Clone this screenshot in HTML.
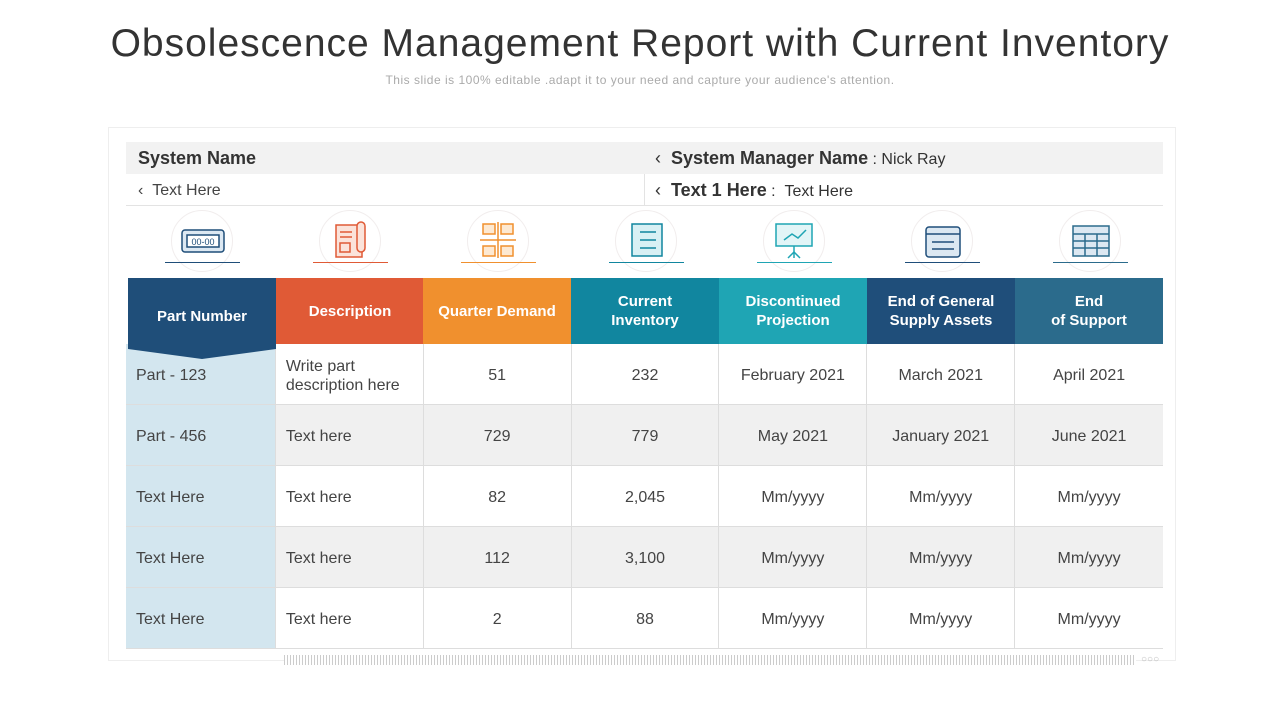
<!DOCTYPE html>
<html><head><meta charset="utf-8"><style>
*{margin:0;padding:0;box-sizing:border-box}
body{width:1280px;height:720px;background:#fff;font-family:"Liberation Sans",sans-serif;position:relative;overflow:hidden;color:#444}
.abs{position:absolute}
h1{position:absolute;top:22px;left:0;width:1280px;text-align:center;font-weight:normal;font-size:39px;color:#333;letter-spacing:1px}
.sub{top:73px;left:0;width:1280px;text-align:center;font-size:12px;color:#aaa;letter-spacing:0.5px}
.card{left:108px;top:127px;width:1068px;height:534px;border:1px solid #eee}
.hdr{height:66px;top:278px;color:#fff;font-weight:bold;font-size:15px;display:flex;align-items:center;justify-content:center;text-align:center;line-height:19px;width:148px}
.cell{width:148px;height:61px;display:flex;align-items:center;justify-content:center;font-size:16px;color:#444;border-right:1px solid #ddd;border-bottom:1px solid #ddd;padding-top:3px}
.l{justify-content:flex-start;padding-left:10px}
.circ{width:62px;height:62px;border-radius:50%;border:1px solid #f1eded;top:210px}
.line{height:1px;top:262px;width:75px}
</style></head><body>
<h1>Obsolescence Management Report with Current Inventory</h1>
<div class="abs sub">This slide is 100% editable .adapt it to your need and capture your audience's attention.</div>
<div class="abs card"></div>
<div class="abs" style="left:126px;top:142px;width:1037px;height:32px;background:#f2f2f2"></div>
<div class="abs" style="left:126px;top:205px;width:1037px;height:1px;background:#e3e3e3"></div>
<div class="abs" style="left:644px;top:174px;width:1px;height:31px;background:#e3e3e3"></div>
<div class="abs" style="left:138px;top:148px;font-size:18px;font-weight:bold;color:#333">System Name</div>
<div class="abs" style="left:138px;top:182px;font-size:16px;color:#444">‹ &nbsp;Text Here</div>
<div class="abs" style="left:655px;top:148px;font-size:18px;color:#333">‹ &nbsp;<b>System Manager Name</b><span style="font-size:16px"> : Nick Ray</span></div>
<div class="abs" style="left:655px;top:180px;font-size:18px;color:#333">‹ &nbsp;<b>Text 1 Here</b><span style="font-size:16px"> : &nbsp;Text Here</span></div>

<div class="abs circ" style="left:171px"></div><div class="abs circ" style="left:319px"></div><div class="abs circ" style="left:467px"></div><div class="abs circ" style="left:615px"></div><div class="abs circ" style="left:763px"></div><div class="abs circ" style="left:911px"></div><div class="abs circ" style="left:1059px"></div>
<div class="abs line" style="left:165px;background:#1f4e79"></div>
<div class="abs line" style="left:313px;background:#e05a36"></div>
<div class="abs line" style="left:461px;background:#f0902e"></div>
<div class="abs line" style="left:609px;background:#11869f"></div>
<div class="abs line" style="left:757px;background:#1fa5b4"></div>
<div class="abs line" style="left:905px;background:#1f4e7a"></div>
<div class="abs line" style="left:1053px;background:#2b6b8c"></div>
<svg class="abs" style="left:0;top:0" width="1280" height="280" fill="none" stroke-width="1.5">
<g stroke="#1f4e79"><rect x="182" y="230" width="42" height="22" rx="3" fill="#dce8f2"/><rect x="187" y="235" width="32" height="12" fill="#fff"/><text x="203" y="245" font-size="9" fill="#1f4e79" stroke="none" text-anchor="middle" font-family="Liberation Sans">00-00</text></g>
<g stroke="#e05a36"><rect x="336" y="225" width="26" height="32" fill="#fbe3da"/><rect x="340" y="243" width="10" height="9"/><line x1="340" y1="232" x2="352" y2="232"/><line x1="340" y1="237" x2="352" y2="237"/><rect x="357" y="222" width="8" height="30" rx="4" fill="#fbe3da"/></g>
<g stroke="#f0902e"><rect x="483" y="224" width="12" height="10" fill="#fde9d2"/><rect x="501" y="224" width="12" height="10" fill="#fde9d2"/><rect x="483" y="246" width="12" height="10" fill="#fde9d2"/><rect x="501" y="246" width="12" height="10" fill="#fde9d2"/><line x1="498" y1="222" x2="498" y2="258"/><line x1="480" y1="240" x2="516" y2="240"/></g>
<g stroke="#11869f"><rect x="632" y="224" width="30" height="32" fill="#d8f0f4"/><line x1="640" y1="232" x2="656" y2="232"/><line x1="640" y1="240" x2="656" y2="240"/><line x1="640" y1="248" x2="656" y2="248"/></g>
<g stroke="#1fa5b4"><rect x="776" y="224" width="36" height="22" fill="#e2f5f7"/><polyline points="784,240 792,234 798,238 806,230"/><line x1="794" y1="246" x2="794" y2="258"/><line x1="794" y1="252" x2="788" y2="258"/><line x1="794" y1="252" x2="800" y2="258"/></g>
<g stroke="#1f4e7a"><rect x="926" y="227" width="34" height="30" rx="3" fill="#dce8f2"/><line x1="926" y1="234" x2="960" y2="234"/><line x1="932" y1="242" x2="954" y2="242"/><line x1="932" y1="249" x2="954" y2="249"/></g>
<g stroke="#2b6b8c"><rect x="1073" y="226" width="36" height="30" fill="#dce8f2"/><line x1="1073" y1="234" x2="1109" y2="234"/><line x1="1073" y1="241" x2="1109" y2="241"/><line x1="1073" y1="248" x2="1109" y2="248"/><line x1="1085" y1="234" x2="1085" y2="256"/><line x1="1097" y1="234" x2="1097" y2="256"/></g>
</svg>

<div class="abs" style="left:126px;top:344px;width:1037px">
<div style="display:flex;background:#fff"><div class="cell l" style="background:#d3e6ef;width:150px">Part - 123</div><div class="cell l" style="line-height:19px">Write part<br>description here</div><div class="cell">51</div><div class="cell">232</div><div class="cell">February 2021</div><div class="cell">March 2021</div><div class="cell" style="border-right:0">April 2021</div></div>
<div style="display:flex;background:#f0f0f0"><div class="cell l" style="background:#d3e6ef;width:150px">Part - 456</div><div class="cell l">Text here</div><div class="cell">729</div><div class="cell">779</div><div class="cell">May 2021</div><div class="cell">January 2021</div><div class="cell" style="border-right:0">June 2021</div></div>
<div style="display:flex;background:#fff"><div class="cell l" style="background:#d3e6ef;width:150px">Text Here</div><div class="cell l">Text here</div><div class="cell">82</div><div class="cell">2,045</div><div class="cell">Mm/yyyy</div><div class="cell">Mm/yyyy</div><div class="cell" style="border-right:0">Mm/yyyy</div></div>
<div style="display:flex;background:#f0f0f0"><div class="cell l" style="background:#d3e6ef;width:150px">Text Here</div><div class="cell l">Text here</div><div class="cell">112</div><div class="cell">3,100</div><div class="cell">Mm/yyyy</div><div class="cell">Mm/yyyy</div><div class="cell" style="border-right:0">Mm/yyyy</div></div>
<div style="display:flex;background:#fff"><div class="cell l" style="background:#d3e6ef;width:150px">Text Here</div><div class="cell l">Text here</div><div class="cell">2</div><div class="cell">88</div><div class="cell">Mm/yyyy</div><div class="cell">Mm/yyyy</div><div class="cell" style="border-right:0">Mm/yyyy</div></div>
</div>

<div class="abs hdr" style="left:128px;background:#1f4e79;padding-top:10px">Part Number</div>
<svg class="abs" style="left:128px;top:343px" width="148" height="16"><polygon points="0,0 148,0 148,6 74,16 0,6" fill="#1f4e79"/></svg>
<div class="abs hdr" style="left:276px;background:#e05a36">Description</div>
<div class="abs hdr" style="left:423px;background:#f0902e">Quarter Demand</div>
<div class="abs hdr" style="left:571px;background:#11869f">Current<br>Inventory</div>
<div class="abs hdr" style="left:719px;background:#1fa5b4">Discontinued<br>Projection</div>
<div class="abs hdr" style="left:867px;background:#1f4e7a">End of General<br>Supply Assets</div>
<div class="abs hdr" style="left:1015px;width:148px;background:#2b6b8c">End<br>of Support</div>

<div class="abs" style="left:284px;top:655px;width:852px;height:10px;background:repeating-linear-gradient(90deg,#ccc 0 1px,#fff 1px 3px)"></div>
<div class="abs" style="left:1141px;top:654px;font-size:10px;color:#bbb">○○○</div>
</body></html>
